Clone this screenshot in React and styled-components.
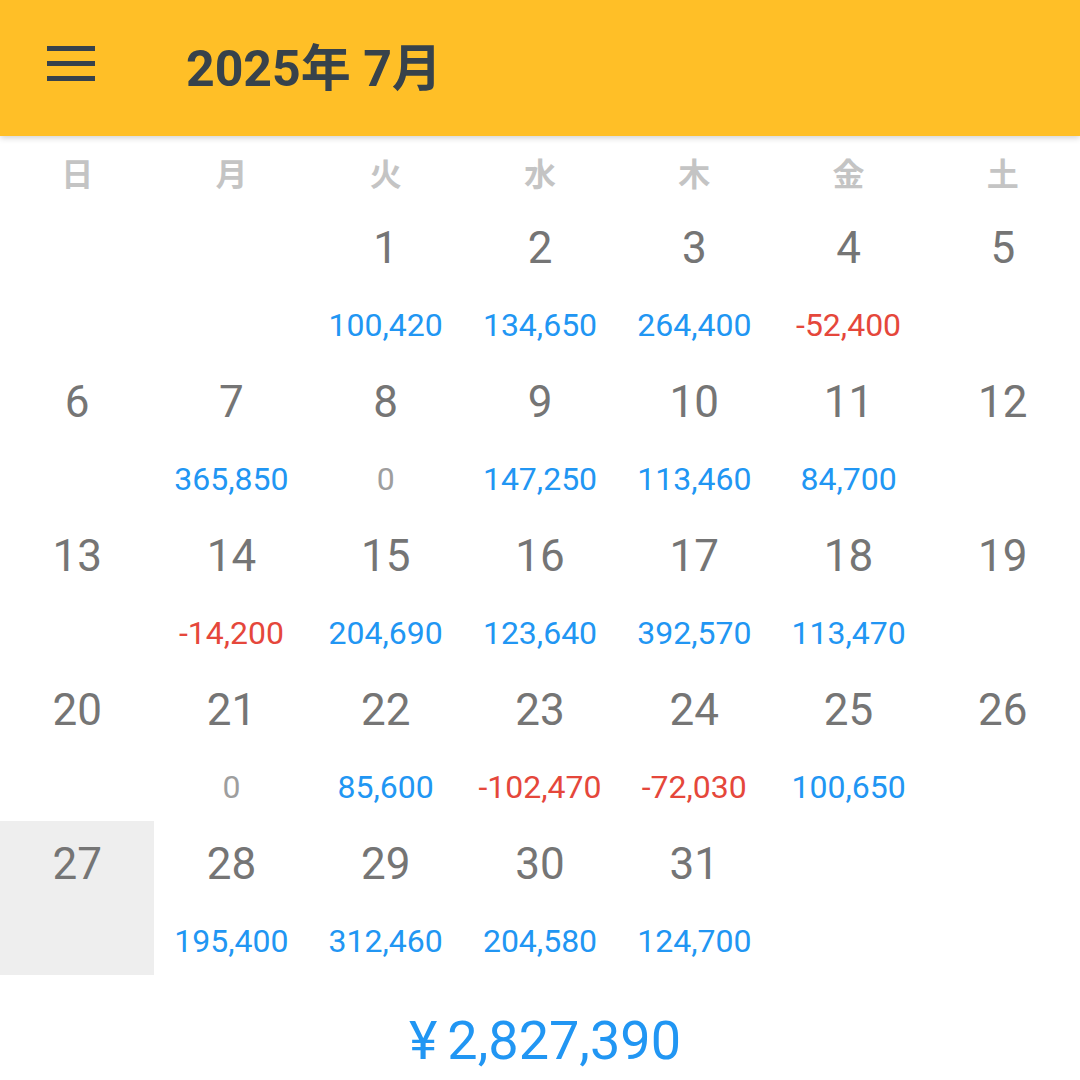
import React from 'react'
import styled, { createGlobalStyle } from 'styled-components'

const GlobalStyle = createGlobalStyle`
  body {
    margin: 0;
    background: #fff;
    font-family: Roboto, "Noto Sans CJK JP", sans-serif;
  }
`

const WEEKDAYS = ['日', '月', '火', '水', '木', '金', '土']

// null = empty cell before the 1st
const DAYS = [
  null, null,
  { d: 1, v: 100420 }, { d: 2, v: 134650 }, { d: 3, v: 264400 }, { d: 4, v: -52400 }, { d: 5 },
  { d: 6 }, { d: 7, v: 365850 }, { d: 8, v: 0 }, { d: 9, v: 147250 }, { d: 10, v: 113460 }, { d: 11, v: 84700 }, { d: 12 },
  { d: 13 }, { d: 14, v: -14200 }, { d: 15, v: 204690 }, { d: 16, v: 123640 }, { d: 17, v: 392570 }, { d: 18, v: 113470 }, { d: 19 },
  { d: 20 }, { d: 21, v: 0 }, { d: 22, v: 85600 }, { d: 23, v: -102470 }, { d: 24, v: -72030 }, { d: 25, v: 100650 }, { d: 26 },
  { d: 27, today: true }, { d: 28, v: 195400 }, { d: 29, v: 312460 }, { d: 30, v: 204580 }, { d: 31, v: 124700 },
]

const fmt = n => n.toLocaleString('en-US')

const Page = styled.div`
  width: 1080px;
  height: 1080px;
  overflow: hidden;
  background: #fff;
`

const Toolbar = styled.header`
  height: 136px;
  box-sizing: border-box;
  background: #ffbf27;
  display: flex;
  align-items: center;
  padding: 0 0 8px 47px;
  box-shadow: 0 2px 6px rgba(0, 0, 0, 0.18);
  position: relative;
  z-index: 1;
`

const MenuButton = styled.div`
  width: 48px;
  height: 35px;
  display: flex;
  flex-direction: column;
  justify-content: space-between;
  margin-right: 91px;
  margin-top: -2px;

  span {
    display: block;
    height: 5px;
    background: #37424b;
  }
`

const Title = styled.h1`
  margin: 0;
  font-size: 50px;
  font-weight: 700;
  color: #37424b;
  font-family: Roboto, "Noto Sans CJK JP", sans-serif;
`

const Weekdays = styled.div`
  display: grid;
  grid-template-columns: repeat(7, 1fr);
  height: 69px;
  align-items: center;
`

const Weekday = styled.div`
  text-align: center;
  font-size: 32px;
  font-weight: 700;
  color: #c4c4c4;
  font-family: "Noto Sans CJK JP", sans-serif;
  padding-top: 2px;
`

const Grid = styled.div`
  display: grid;
  grid-template-columns: repeat(7, 1fr);
  grid-auto-rows: 154px;
`

const Cell = styled.div`
  display: grid;
  grid-template-rows: 86px 68px;
  align-items: center;
  justify-items: center;
  background: ${p => (p.$today ? '#eeeeee' : 'transparent')};
`

const DayNum = styled.div`
  font-size: 44px;
  color: #757575;
  line-height: 1;
`

const Amount = styled.div`
  font-size: 32px;
  line-height: 1;
  color: ${p => (p.$value > 0 ? '#2196f3' : p.$value < 0 ? '#e5473b' : '#9e9e9e')};
`

const Total = styled.div`
  text-align: center;
  padding: 40px 0 0 10px;
  font-size: 54px;
  line-height: 52px;
  color: #2196f3;

  span {
    margin-right: 10px;
  }
`

export default function App() {
  return (
    <Page>
      <GlobalStyle />
      <Toolbar>
        <MenuButton>
          <span />
          <span />
          <span />
        </MenuButton>
        <Title>2025年 7月</Title>
      </Toolbar>
      <Weekdays>
        {WEEKDAYS.map(w => (
          <Weekday key={w}>{w}</Weekday>
        ))}
      </Weekdays>
      <Grid>
        {DAYS.map((day, i) =>
          day ? (
            <Cell key={i} $today={day.today}>
              <DayNum>{day.d}</DayNum>
              {day.v !== undefined ? <Amount $value={day.v}>{fmt(day.v)}</Amount> : <div />}
            </Cell>
          ) : (
            <Cell key={i} />
          )
        )}
      </Grid>
      <Total>
        <span>¥</span>2,827,390
      </Total>
    </Page>
  )
}
